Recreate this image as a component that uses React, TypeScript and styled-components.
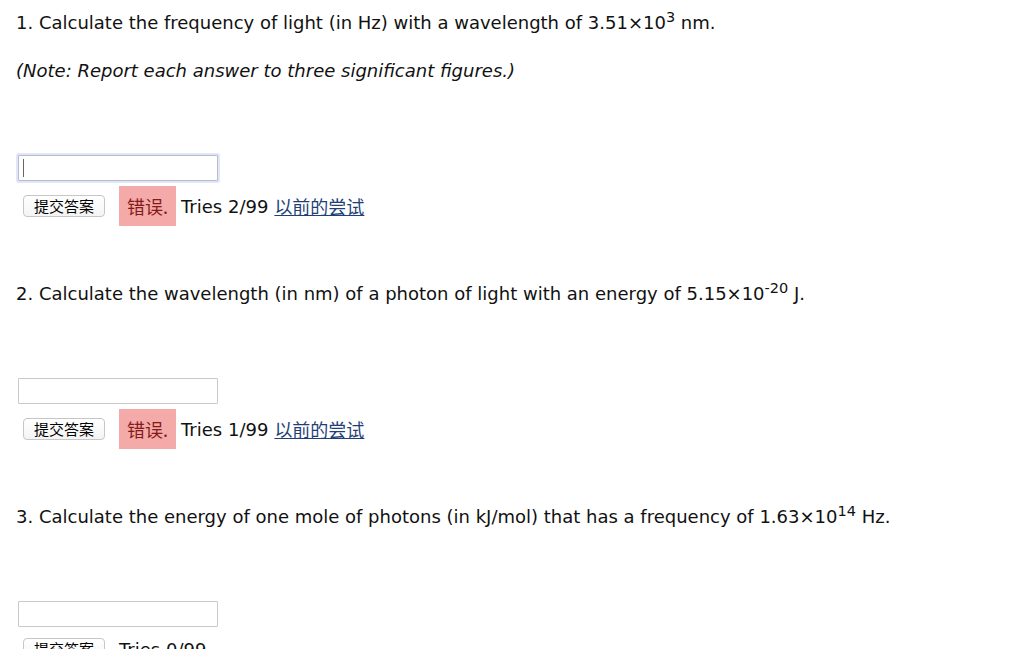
import React from "react";
import styled, { createGlobalStyle } from "styled-components";

const GlobalStyle = createGlobalStyle`
  html, body {
    margin: 0;
    padding: 0;
    background: #ffffff;
  }
  body {
    font-family: "DejaVu Sans", "Noto Sans CJK SC", sans-serif;
    color: #111111;
  }
`;

const Page = styled.div`
  display: flex;
  flex-direction: column;
  padding: 13px 0 0 16px;
  width: 1008px;
  height: 636px;
  overflow: hidden;
`;

const Problem = styled.section<{ $first?: boolean }>`
  display: flex;
  flex-direction: column;
  margin-top: ${(p) => (p.$first ? "0" : "58px")};
`;

const QuestionText = styled.p`
  margin: 0;
  font-size: 18px;
  line-height: 20px;
  sup {
    font-size: 14.5px;
    line-height: 0;
    vertical-align: 7px;
  }
`;

const Note = styled.p`
  margin: 28px 0 0;
  font-size: 18px;
  line-height: 20px;
  font-style: italic;
`;

const AnswerWrap = styled.div`
  position: relative;
  margin: 74px 0 0 2px;
  width: 200px;
  height: 26px;
`;

const AnswerInput = styled.input<{ $focused?: boolean }>`
  box-sizing: border-box;
  width: 200px;
  height: 26px;
  margin: 0;
  padding: 2px 4px;
  border: 1px solid ${(p) => (p.$focused ? "#b9bcc4" : "#c9c9c9")};
  border-radius: 1px;
  outline: none;
  font: 14px "DejaVu Sans", sans-serif;
  background: #fff;
  box-shadow: ${(p) => (p.$focused ? "0 0 0 2px #dfe7f8" : "none")};
`;

const Caret = styled.span`
  position: absolute;
  left: 5px;
  top: 4px;
  width: 1px;
  height: 18px;
  background: #666;
`;

const ResultRow = styled.div<{ $hasError?: boolean }>`
  display: flex;
  align-items: center;
  margin-top: ${(p) => (p.$hasError ? "5px" : "11px")};
  min-height: ${(p) => (p.$hasError ? "40px" : "22px")};
  font-size: 18px;
`;

const SubmitButton = styled.button`
  box-sizing: border-box;
  width: 82px;
  height: 22px;
  margin: 0 14px 0 7px;
  padding: 0;
  border: 1px solid #c6c6c6;
  border-radius: 4px;
  background: linear-gradient(#ffffff, #f4f4f4);
  font: 15px "Noto Sans CJK SC", sans-serif;
  line-height: 20px;
  color: #000;
`;

const ErrorBadge = styled.span`
  display: flex;
  align-items: center;
  height: 40px;
  padding: 0 8px;
  margin-right: 5px;
  background: #f4aaa9;
  color: #851a18;
  font-family: "Noto Sans CJK SC", "DejaVu Sans", sans-serif;
  font-size: 18px;
`;

const Tries = styled.span`
  margin-right: 6px;
`;

const PrevLink = styled.a`
  color: #1f3f77;
  text-decoration: underline;
  font-family: "Noto Sans CJK SC", sans-serif;
  font-size: 18px;
`;

type Item = {
  text: React.ReactNode;
  note?: string;
  focused?: boolean;
  wrong: boolean;
  tries: number;
};

const items: Item[] = [
  {
    text: (
      <>
        1. Calculate the frequency of light (in Hz) with a wavelength of 3.51×10<sup>3</sup> nm.
      </>
    ),
    note: "(Note: Report each answer to three significant figures.)",
    focused: true,
    wrong: true,
    tries: 2,
  },
  {
    text: (
      <>
        2. Calculate the wavelength (in nm) of a photon of light with an energy of 5.15×10<sup>-20</sup> J.
      </>
    ),
    wrong: true,
    tries: 1,
  },
  {
    text: (
      <>
        3. Calculate the energy of one mole of photons (in kJ/mol) that has a frequency of 1.63×10<sup>14</sup> Hz.
      </>
    ),
    wrong: false,
    tries: 0,
  },
];

export default function App() {
  return (
    <>
      <GlobalStyle />
      <Page>
        {items.map((item, i) => (
          <Problem key={i} $first={i === 0}>
            <QuestionText>{item.text}</QuestionText>
            {item.note && <Note>{item.note}</Note>}
            <AnswerWrap>
              <AnswerInput type="text" $focused={item.focused} readOnly />
              {item.focused && <Caret />}
            </AnswerWrap>
            <ResultRow $hasError={item.wrong}>
              <SubmitButton>提交答案</SubmitButton>
              {item.wrong && <ErrorBadge>错误.</ErrorBadge>}
              <Tries>Tries {item.tries}/99</Tries>
              {item.wrong && <PrevLink href="#">以前的尝试</PrevLink>}
            </ResultRow>
          </Problem>
        ))}
      </Page>
    </>
  );
}
